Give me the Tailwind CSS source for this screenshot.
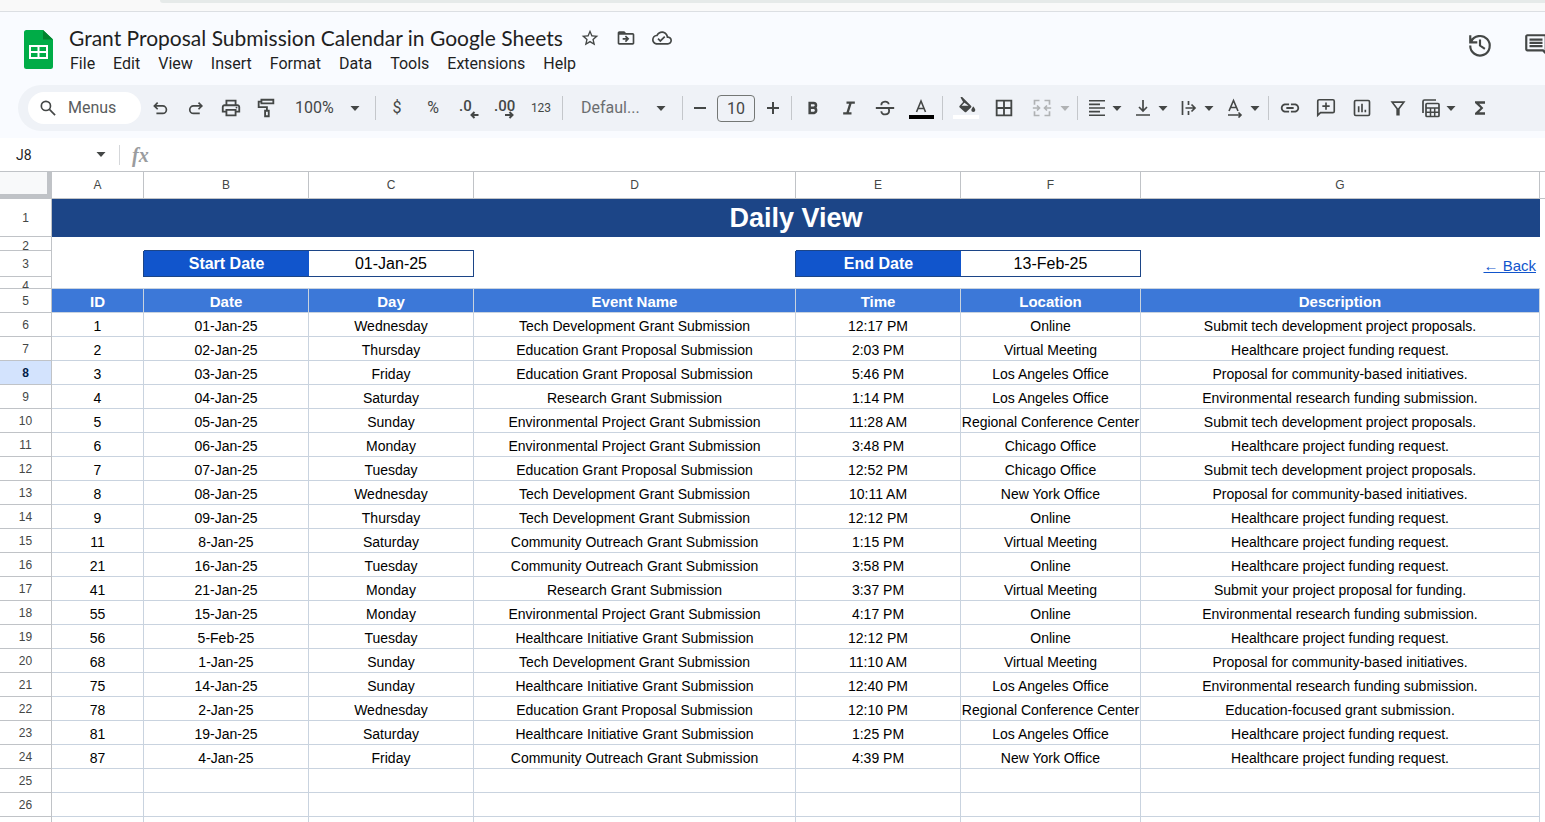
<!DOCTYPE html>
<html lang="en">
<head>
  <meta charset="UTF-8" />
  <meta name="viewport" content="width=device-width, initial-scale=1" />
  <title>Grant Proposal Submission Calendar in Google Sheets</title>
  <script src="https://cdn.jsdelivr.net/npm/@tailwindcss/browser@4"></script>
</head>
<body class="flex h-screen flex-col overflow-hidden bg-[#f9fbff] font-['Roboto',sans-serif] text-[#444746]">

  <!-- Browser strip -->
  <div class="h-3 shrink-0 border-b border-[#dcdfe3] bg-[#f9f9f9] pl-40">
    <div class="h-[3px] rounded-bl-lg bg-[#e6eae9]"></div>
  </div>

  <!-- Header -->
  <header class="flex h-[73px] shrink-0 items-start pl-6">
    <svg class="mt-[18px] h-[39px] w-[29px] shrink-0" viewBox="0 0 29 39">
      <path fill="#00ac47" d="M2.500 0H19l10 9.500V36.500a2.500 2.500 0 0 1-2.500 2.500h-24A2.500 2.500 0 0 1 0 36.500v-34A2.500 2.500 0 0 1 2.500 0z" />
      <path fill="#00832d" d="M19 0l10 9.500H19z" />
      <path fill="#fff" fill-rule="evenodd" d="M5 15h19v14H5zM7 17v4h6.500v-4zM15.500 17v4H22v-4zM7 23v4h6.500v-4zM15.500 23v4H22v-4z" />
    </svg>

    <div class="ml-4 mt-3">
      <div class="flex h-7 items-center">
        <h1 class="font-['Lato',sans-serif] text-[21px] leading-7 text-[#1f1f1f]">Grant Proposal Submission Calendar in Google Sheets</h1>
        <div class="ml-[17px] flex gap-4">
          <button aria-label="Star"><svg class="size-5" viewBox="0 0 24 24" fill="currentColor"><path d="M22 9.240l-7.190-.620L12 2 9.190 8.630 2 9.240l5.460 4.730L5.820 21 12 17.270 18.180 21l-1.630-7.030L22 9.240zM12 15.400l-3.760 2.270 1-4.280-3.320-2.880 4.380-.380L12 6.100l1.710 4.040 4.380.380-3.320 2.880 1 4.280L12 15.400z" /></svg></button>
          <button aria-label="Move"><svg class="size-5" viewBox="0 0 24 24" fill="currentColor"><path d="M20 6h-8l-2-2H4c-1.100 0-2 .9-2 2v12c0 1.100.9 2 2 2h16c1.100 0 2-.9 2-2V8c0-1.100-.9-2-2-2zm0 12H4V8h16v10zm-8.010-1L16 13l-4.010-4-1.410 1.410L12.160 12H8v2h4.160l-1.590 1.590L11.990 17z" /></svg></button>
          <button aria-label="Saved to Drive"><svg class="size-5" viewBox="0 0 24 24" fill="currentColor"><path d="M19.350 10.040C18.670 6.590 15.640 4 12 4 9.110 4 6.610 5.640 5.360 8.040 2.350 8.360 0 10.900 0 14c0 3.310 2.690 6 6 6h13c2.760 0 5-2.240 5-5 0-2.640-2.050-4.780-4.650-4.960zM19 18H6c-2.210 0-4-1.790-4-4 0-2.050 1.530-3.760 3.560-3.970l1.070-.110.5-.950C8.080 7.140 9.940 6 12 6c2.620 0 4.880 1.860 5.390 4.430l.3 1.500 1.530.110c1.560.1 2.780 1.410 2.780 2.960 0 1.650-1.350 3-3 3zm-9-3.820l-2.090-2.090L6.500 13.500 10 17l6.010-6.010-1.410-1.410z" /></svg></button>
        </div>
      </div>
      <nav class="flex gap-[18px] pl-px text-base leading-6 text-[#1f1f1f]">
        <button>File</button>
        <button>Edit</button>
        <button>View</button>
        <button>Insert</button>
        <button>Format</button>
        <button>Data</button>
        <button>Tools</button>
        <button>Extensions</button>
        <button>Help</button>
      </nav>
    </div>

    <div class="-mr-1 ml-auto mt-5 flex gap-[30px]">
      <button aria-label="Version history"><svg class="size-[26px]" viewBox="0 0 24 24" fill="none" stroke="currentColor" stroke-width="2"><path d="M3.800 9A9 9 0 1 1 3 12.500M3 3v6.500h6.500M3.800 9A9 9 0 0 1 5.500 6M12 7v5.500l4.500 3" /></svg></button>
      <button aria-label="Comments"><svg class="size-[26px]" viewBox="0 0 24 24" fill="currentColor"><path d="M21.990 4c0-1.100-.890-2-1.990-2H4c-1.100 0-2 .9-2 2v12c0 1.100.9 2 2 2h14l4 4-.010-18zM20 4v13.170L18.830 16H4V4h16zM6 12h12v2H6zm0-3h12v2H6zm0-3h12v2H6z" /></svg></button>
    </div>
  </header>

  <!-- Toolbar -->
  <div role="toolbar" class="ml-[18px] flex h-[46px] shrink-0 items-center rounded-l-full bg-[#eff2f7] pl-2.5">
    <label class="mr-0.5 flex h-8 w-[113px] shrink-0 items-center rounded-full bg-white pl-2.5">
      <svg class="size-5 shrink-0" viewBox="0 0 24 24" fill="none" stroke="currentColor" stroke-width="2"><circle cx="9.500" cy="9.500" r="5.500" /><path d="M13.700 13.700L20.500 20.500" /></svg>
      <input type="text" aria-label="Search the menus" placeholder="Menus" class="ml-2.5 w-16 text-base outline-none placeholder:text-[#5a5d5e]" />
    </label>

    <button aria-label="Undo" class="flex w-[35px] shrink-0 justify-center"><svg class="size-5" viewBox="0 0 24 24" fill="none" stroke="currentColor" stroke-width="2"><path d="M8 5.500L4 9.500l4 4M4.500 9.500H14a4.500 4.500 0 0 1 0 9H6.500" /></svg></button>
    <button aria-label="Redo" class="flex w-[35px] shrink-0 justify-center"><svg class="size-5" viewBox="0 0 24 24" fill="none" stroke="currentColor" stroke-width="2"><path d="M15 5.500l4 4-4 4M18.500 9.500H9a4.500 4.500 0 0 0 0 9h7.500" /></svg></button>
    <button aria-label="Print" class="flex w-[35px] shrink-0 justify-center"><svg class="size-[22px]" viewBox="0 0 24 24" fill="currentColor"><path d="M19 8h-1V3H6v5H5c-1.660 0-3 1.340-3 3v6h4v4h12v-4h4v-6c0-1.660-1.340-3-3-3zM8 5h8v3H8V5zm8 12v2H8v-4h8v2zm2-2v-2H6v2H4v-4c0-.550.450-1 1-1h14c.550 0 1 .450 1 1v4h-2z" /><circle cx="18" cy="11.500" r="1" /></svg></button>
    <button aria-label="Paint format" class="flex w-[35px] shrink-0 justify-center"><svg class="size-[22px]" viewBox="0 0 24 24" fill="none" stroke="currentColor" stroke-width="2"><path d="M7 3h13v4H7zM7 5H4v6h9v4M11 15h4v6h-4z" /></svg></button>

    <label class="flex w-[89px] shrink-0 items-center pl-3">
      <select aria-label="Zoom" class="w-[55px] appearance-none text-base"><option>100%</option></select>
      <svg class="w-2.5 shrink-0" viewBox="0 0 10 5" fill="currentColor"><path d="M0.500 0h9L5 5z" /></svg>
    </label>

    <span class="mx-[3px] h-6 w-px shrink-0 bg-[#c4c7cb]"></span>

    <button aria-label="Format as currency" class="w-9 shrink-0 text-base leading-5">$</button>
    <button aria-label="Format as percent" class="w-9 shrink-0 text-base leading-5">%</button>
    <button aria-label="Decrease decimal places" class="flex w-9 shrink-0 justify-center"><svg class="size-6" viewBox="0 0 24 24"><text x="2" y="15" font-size="15" font-weight="500" fill="currentColor">.0</text><path fill="none" stroke="currentColor" stroke-width="2" d="M21.500 19h-7M17.500 16l-3 3 3 3" /></svg></button>
    <button aria-label="Increase decimal places" class="flex w-9 shrink-0 justify-center"><svg class="size-6" viewBox="0 0 24 24"><text x="1" y="15" font-size="15" font-weight="500" fill="currentColor">.00</text><path fill="none" stroke="currentColor" stroke-width="2" d="M12 19h7.500M16.500 16l3 3-3 3" /></svg></button>
    <button aria-label="More formats" class="w-9 shrink-0 text-xs leading-5">123</button>

    <span class="mx-[3px] h-6 w-px shrink-0 bg-[#c4c7cb]"></span>

    <label class="flex w-[113px] shrink-0 items-center pl-[15px]">
      <select aria-label="Font" class="w-[75px] appearance-none text-base text-[#6b6e70]"><option>Defaul...</option></select>
      <svg class="w-2.5 shrink-0" viewBox="0 0 10 5" fill="currentColor"><path d="M0.500 0h9L5 5z" /></svg>
    </label>

    <span class="mx-[3px] h-6 w-px shrink-0 bg-[#c4c7cb]"></span>

    <button aria-label="Decrease font size" class="flex w-7 shrink-0 justify-center"><svg class="size-3" viewBox="0 0 12 12"><path fill="currentColor" d="M0 5h12v2H0z" /></svg></button>
    <input type="text" aria-label="Font size" value="10" class="mx-[3px] h-[27px] w-[38px] shrink-0 rounded-sm border border-[#747775] text-center text-base" />
    <button aria-label="Increase font size" class="flex w-[30px] shrink-0 justify-center"><svg class="size-3" viewBox="0 0 12 12"><path fill="currentColor" d="M0 5h12v2H0zM5 0h2v12H5z" /></svg></button>

    <span class="mx-[3px] h-6 w-px shrink-0 bg-[#c4c7cb]"></span>

    <button aria-label="Bold" class="flex w-9 shrink-0 justify-center"><svg class="size-5" viewBox="0 0 24 24" fill="none" stroke="currentColor" stroke-width="3"><path d="M8 6h4.800a2.800 2.800 0 0 1 0 5.600H8zM8 11.600h5.300a3.300 3.300 0 0 1 0 6.400H8zM8 5v14" /></svg></button>
    <button aria-label="Italic" class="flex w-9 shrink-0 justify-center"><svg class="size-5" viewBox="0 0 24 24" fill="none" stroke="currentColor" stroke-width="2.800"><path d="M9 5.500h10M5 18.500h10M14 5.500l-4 13" /></svg></button>
    <button aria-label="Strikethrough" class="flex w-9 shrink-0 justify-center"><svg class="size-[22px]" viewBox="0 0 24 24" fill="none" stroke="currentColor" stroke-width="2"><path d="M2 12h20M8 9c0-5 8-5 8-1M8 15.500c0 5 8.500 4.500 8.500-.5 0-1-.3-2-1-3" /></svg></button>
    <button aria-label="Text color" class="flex w-9 shrink-0 flex-col items-center"><svg class="h-[17px] w-4" viewBox="0 0 16 17" fill="none" stroke="currentColor" stroke-width="1.600"><path d="M3.500 14L8 3l4.500 11M5 10.500h6" /></svg><span class="h-1 w-[25px] bg-black"></span></button>

    <span class="mx-[3px] h-6 w-px shrink-0 bg-[#c4c7cb]"></span>

    <button aria-label="Fill color" class="flex w-10 shrink-0 flex-col items-center"><svg class="h-[18px] w-5" viewBox="0 0 20 18"><path fill="currentColor" d="M4.500 0.500l1.200-1 9.300 9.200a1.200 1.200 0 0 1 0 1.700l-4.500 4.300a1.400 1.400 0 0 1-2 0L3.700 10.400a1.200 1.200 0 0 1 0-1.700l3.400-3.700zM8.400 5.800L5.600 8.700h7z" fill-rule="evenodd" /><path fill="currentColor" d="M17.300 9.500s2 2.200 2 3.500a2 2 0 0 1-4 0c0-1.300 2-3.500 2-3.500z" /></svg><span class="h-1 w-[26px] bg-white"></span></button>
    <button aria-label="Borders" class="flex w-9 shrink-0 justify-center"><svg class="size-[22px]" viewBox="0 0 24 24" fill="none" stroke="currentColor" stroke-width="2"><path d="M4 4h16v16H4zM12 4v16M4 12h16" /></svg></button>
    <button aria-label="Merge cells" class="flex w-[52px] shrink-0 items-center gap-2 pl-2.5 text-[#b0b2b4]"><svg class="size-5 shrink-0" viewBox="0 0 24 24" fill="none" stroke="currentColor" stroke-width="2"><path d="M9 3H3v5M15 3h6v5M9 21H3v-5M15 21h6v-5M1 12h8M6 9l3 3-3 3M23 12h-8M18 9l-3 3 3 3" /></svg><svg class="w-2.5 shrink-0" viewBox="0 0 10 5" fill="currentColor"><path d="M0.500 0h9L5 5z" /></svg></button>

    <span class="mx-[3px] h-6 w-px shrink-0 bg-[#c4c7cb]"></span>

    <button aria-label="Horizontal align" class="flex w-[46px] shrink-0 items-center gap-[5px] pl-1.5"><svg class="size-5 shrink-0" viewBox="0 0 20 20" fill="currentColor"><path d="M2 2h16v1.600H2zM2 5.600h11v1.600H2zM2 9.200h16v1.600H2zM2 12.800h11v1.600H2zM2 16.400h16V18H2z" /></svg><svg class="w-2.5 shrink-0" viewBox="0 0 10 5" fill="currentColor"><path d="M0.500 0h9L5 5z" /></svg></button>
    <button aria-label="Vertical align" class="flex w-[46px] shrink-0 items-center gap-[5px] pl-1.5"><svg class="size-5 shrink-0" viewBox="0 0 20 20" fill="none" stroke="currentColor" stroke-width="1.700"><path d="M3 17h14M10 2v11M6 9l4 4 4-4" /></svg><svg class="w-2.5 shrink-0" viewBox="0 0 10 5" fill="currentColor"><path d="M0.500 0h9L5 5z" /></svg></button>
    <button aria-label="Text wrapping" class="flex w-[46px] shrink-0 items-center gap-[5px] pl-1.5"><svg class="size-5 shrink-0" viewBox="0 0 20 20" fill="none" stroke="currentColor" stroke-width="1.700"><path d="M3.500 3v14M9.500 3v4M9.500 13v4M6.500 10h9.500M12.500 6.500L16 10l-3.500 3.500" /></svg><svg class="w-2.5 shrink-0" viewBox="0 0 10 5" fill="currentColor"><path d="M0.500 0h9L5 5z" /></svg></button>
    <button aria-label="Text rotation" class="flex w-[46px] shrink-0 items-center gap-[5px] pl-1.5"><svg class="size-5 shrink-0" viewBox="0 0 20 20" fill="none" stroke="currentColor" stroke-width="1.600"><path d="M4 13L8.500 2.500 13 13M5.500 9.500h6M3 17h13M13.500 14.500L16 17l-2.500 2.500" /></svg><svg class="w-2.5 shrink-0" viewBox="0 0 10 5" fill="currentColor"><path d="M0.500 0h9L5 5z" /></svg></button>

    <span class="mx-[3px] h-6 w-px shrink-0 bg-[#c4c7cb]"></span>

    <button aria-label="Insert link" class="flex w-9 shrink-0 justify-center"><svg class="size-[22px]" viewBox="0 0 24 24" fill="currentColor"><path d="M3.900 12c0-1.710 1.390-3.100 3.100-3.100h4V7H7c-2.760 0-5 2.240-5 5s2.240 5 5 5h4v-1.900H7c-1.710 0-3.100-1.390-3.100-3.100zM8 13h8v-2H8v2zm9-6h-4v1.900h4c1.710 0 3.100 1.390 3.100 3.100s-1.390 3.100-3.100 3.100h-4V17h4c2.760 0 5-2.240 5-5s-2.240-5-5-5z" /></svg></button>
    <button aria-label="Insert comment" class="flex w-9 shrink-0 justify-center"><svg class="size-[22px]" viewBox="0 0 24 24" fill="none" stroke="currentColor" stroke-width="1.800"><path d="M3 20V4.500A1.500 1.500 0 0 1 4.500 3h15A1.500 1.500 0 0 1 21 4.500v11a1.500 1.500 0 0 1-1.500 1.500H6zM12 6v8M8 10h8" /></svg></button>
    <button aria-label="Insert chart" class="flex w-9 shrink-0 justify-center"><svg class="size-5" viewBox="0 0 24 24" fill="none" stroke="currentColor" stroke-width="2"><rect x="3" y="3" width="18" height="18" rx="1.500" /><path d="M8 10v7M12 7v10M16 14v3" /></svg></button>
    <button aria-label="Create a filter" class="flex w-9 shrink-0 justify-center"><svg class="size-5" viewBox="0 0 24 24" fill="none" stroke="currentColor" stroke-width="2"><path d="M5 5h14l-6 8v7h-2v-7z" /></svg></button>
    <button aria-label="Table views" class="flex w-[46px] shrink-0 items-center gap-[5px] pl-[5px]"><svg class="size-5 shrink-0" viewBox="0 0 20 20" fill="none" stroke="currentColor" stroke-width="1.700"><path d="M2 15V3.500A1.500 1.500 0 0 1 3.500 2H15" /><rect x="5" y="5.500" width="13" height="13" rx="1" /><path stroke-width="1.500" d="M5 10h13M5 14.200h13M9.500 10v8M13.700 10v8" /></svg><svg class="w-2.5 shrink-0" viewBox="0 0 10 5" fill="currentColor"><path d="M0.500 0h9L5 5z" /></svg></button>
    <button aria-label="Functions" class="flex w-9 shrink-0 justify-center"><svg class="size-5" viewBox="0 0 24 24" fill="currentColor"><path d="M18 4H6v2l6.500 6L6 18v2h12v-3h-7l5-5-5-5h7z" /></svg></button>
  </div>

  <!-- Formula bar -->
  <div class="mt-[7px] flex h-[33px] shrink-0 items-center bg-white">
    <label class="flex w-[119px] items-center pl-4">
      <input type="text" aria-label="Name box" value="J8" class="w-20 text-sm text-[#1f1f1f]" />
      <svg class="w-2.5 shrink-0" viewBox="0 0 10 5" fill="currentColor"><path d="M0.500 0h9L5 5z" /></svg>
    </label>
    <span class="h-5 w-px bg-[#d5d7da]"></span>
    <label for="formula" class="ml-3 font-['Liberation_Serif',serif] text-xl font-bold italic text-[#9a9c9e]">fx</label>
    <input id="formula" type="text" class="ml-3 h-full min-w-0 flex-1" />
  </div>

  <!-- Sheet -->
  <main class="min-h-0 flex-1 overflow-hidden bg-white font-['Liberation_Sans',sans-serif]">
    <table class="w-full table-fixed border-separate border-spacing-0 border-t border-[#c0c3c7] text-center text-sm text-black">
      <colgroup>
        <col class="w-[52px]" />
        <col class="w-[92px]" />
        <col class="w-[165px]" />
        <col class="w-[165px]" />
        <col class="w-[322px]" />
        <col class="w-[165px]" />
        <col class="w-[180px]" />
        <col />
        <col class="w-[5px]" />
      </colgroup>
      <thead>
        <tr id="letters" class="h-[27px] text-xs text-[#444746]">
          <td class="border-r-[5px] border-b-[5px] border-[#c0c3c7] bg-[#f8f9fa] p-0"></td>
        </tr>
      </thead>
      <tbody id="sheet">
        <tr class="h-[38px]">
          <th scope="row" class="border-r border-b border-[#c0c3c7] p-0 text-xs font-normal text-[#444746]">1</th>
          <td colspan="7" class="bg-[#1c4587] p-0 text-[27px] leading-8 font-bold text-white">Daily View</td>
          <td class="p-0"></td>
        </tr>
        <tr class="h-3.5">
          <th scope="row" class="border-r border-b border-[#c0c3c7] p-0 text-xs font-normal text-[#444746]"><div class="h-[13px] overflow-hidden leading-[18px]">2</div></th>
          <td class="p-0"></td>
          <td colspan="2" class="border-b border-[#1c4587] p-0"></td>
          <td class="p-0"></td>
          <td colspan="2" class="border-b border-[#1c4587] p-0"></td>
          <td colspan="2" class="p-0"></td>
        </tr>
        <tr class="h-[26px] text-base">
          <th scope="row" class="border-r border-b border-[#c0c3c7] p-0 text-xs font-normal text-[#444746]">3</th>
          <td class="border-r border-[#1c4587] p-0"></td>
          <td class="border-b border-[#1c4587] bg-[#1155cc] p-0 pt-px font-bold text-white">Start Date</td>
          <td class="border-r border-b border-[#1c4587] p-0 pt-px">01-Jan-25</td>
          <td class="border-r border-[#1c4587] p-0"></td>
          <td class="border-b border-[#1c4587] bg-[#1155cc] p-0 pt-px font-bold text-white">End Date</td>
          <td class="border-r border-b border-[#1c4587] p-0 pt-px">13-Feb-25</td>
          <td class="p-0 pt-1 pr-1 text-right text-[15px] leading-5 text-[#1155cc]"><a href="#" class="underline">← Back</a></td>
          <td class="p-0"></td>
        </tr>
        <tr class="h-3">
          <th scope="row" class="border-r border-b border-[#c0c3c7] p-0 text-xs font-normal text-[#444746]"><div class="h-[11px] overflow-hidden leading-[18px]">4</div></th>
          <td colspan="7" class="border-b border-[#c9d3df] p-0"></td>
          <td class="p-0"></td>
        </tr>
      </tbody>
    </table>
  </main>

  <script>
    const headings = ['ID', 'Date', 'Day', 'Event Name', 'Time', 'Location', 'Description'];

    const events = [
      ['1', '01-Jan-25', 'Wednesday', 'Tech Development Grant Submission', '12:17 PM', 'Online', 'Submit tech development project proposals.'],
      ['2', '02-Jan-25', 'Thursday', 'Education Grant Proposal Submission', '2:03 PM', 'Virtual Meeting', 'Healthcare project funding request.'],
      ['3', '03-Jan-25', 'Friday', 'Education Grant Proposal Submission', '5:46 PM', 'Los Angeles Office', 'Proposal for community-based initiatives.'],
      ['4', '04-Jan-25', 'Saturday', 'Research Grant Submission', '1:14 PM', 'Los Angeles Office', 'Environmental research funding submission.'],
      ['5', '05-Jan-25', 'Sunday', 'Environmental Project Grant Submission', '11:28 AM', 'Regional Conference Center', 'Submit tech development project proposals.'],
      ['6', '06-Jan-25', 'Monday', 'Environmental Project Grant Submission', '3:48 PM', 'Chicago Office', 'Healthcare project funding request.'],
      ['7', '07-Jan-25', 'Tuesday', 'Education Grant Proposal Submission', '12:52 PM', 'Chicago Office', 'Submit tech development project proposals.'],
      ['8', '08-Jan-25', 'Wednesday', 'Tech Development Grant Submission', '10:11 AM', 'New York Office', 'Proposal for community-based initiatives.'],
      ['9', '09-Jan-25', 'Thursday', 'Tech Development Grant Submission', '12:12 PM', 'Online', 'Healthcare project funding request.'],
      ['11', '8-Jan-25', 'Saturday', 'Community Outreach Grant Submission', '1:15 PM', 'Virtual Meeting', 'Healthcare project funding request.'],
      ['21', '16-Jan-25', 'Tuesday', 'Community Outreach Grant Submission', '3:58 PM', 'Online', 'Healthcare project funding request.'],
      ['41', '21-Jan-25', 'Monday', 'Research Grant Submission', '3:37 PM', 'Virtual Meeting', 'Submit your project proposal for funding.'],
      ['55', '15-Jan-25', 'Monday', 'Environmental Project Grant Submission', '4:17 PM', 'Online', 'Environmental research funding submission.'],
      ['56', '5-Feb-25', 'Tuesday', 'Healthcare Initiative Grant Submission', '12:12 PM', 'Online', 'Healthcare project funding request.'],
      ['68', '1-Jan-25', 'Sunday', 'Tech Development Grant Submission', '11:10 AM', 'Virtual Meeting', 'Proposal for community-based initiatives.'],
      ['75', '14-Jan-25', 'Sunday', 'Healthcare Initiative Grant Submission', '12:40 PM', 'Los Angeles Office', 'Environmental research funding submission.'],
      ['78', '2-Jan-25', 'Wednesday', 'Education Grant Proposal Submission', '12:10 PM', 'Regional Conference Center', 'Education-focused grant submission.'],
      ['81', '19-Jan-25', 'Saturday', 'Healthcare Initiative Grant Submission', '1:25 PM', 'Los Angeles Office', 'Healthcare project funding request.'],
      ['87', '4-Jan-25', 'Friday', 'Community Outreach Grant Submission', '4:39 PM', 'New York Office', 'Healthcare project funding request.'],
    ];

    const emptyRow = ['', '', '', '', '', '', ''];
    const activeRow = 8;
    const firstRow = 5;

    const numberClass = 'border-r border-b border-[#c0c3c7] p-0 text-xs font-normal text-[#444746]';
    const activeNumberClass = 'border-r border-b border-[#c0c3c7] bg-[#d3e3fd] p-0 text-xs font-bold text-[#041e49]';
    const headingClass = 'border-r border-b border-[#c9d3df] bg-[#3c78d8] p-0 pt-[3px] text-[15px] leading-5 text-white';
    const cellClass = 'border-r border-b border-[#c9d3df] p-0 pt-1 leading-[19px] whitespace-nowrap';

    // Column letters
    const letters = document.getElementById('letters');
    'ABCDEFG'.split('').forEach(letter => {
      letters.innerHTML += `<th scope="col" class="border-r border-b border-[#c0c3c7] p-0 font-normal">${letter}</th>`;
    });
    letters.innerHTML += '<td class="border-b border-[#c0c3c7] p-0"></td>';

    // Event table, followed by the empty rows
    const sheet = document.getElementById('sheet');
    const rows = [headings, ...events, emptyRow, emptyRow, emptyRow];

    rows.forEach((row, index) => {
      const number = firstRow + index;
      const tr = document.createElement('tr');
      tr.className = 'h-6';

      const cells = row.map(value => index === 0
        ? `<th scope="col" class="${headingClass}">${value}</th>`
        : `<td class="${cellClass}">${value}</td>`);

      tr.innerHTML = `
        <th scope="row" class="${number === activeRow ? activeNumberClass : numberClass}">${number}</th>
        ${cells.join('')}
        <td class="p-0"></td>
      `;
      sheet.appendChild(tr);
    });
  </script>

</body>
</html>
